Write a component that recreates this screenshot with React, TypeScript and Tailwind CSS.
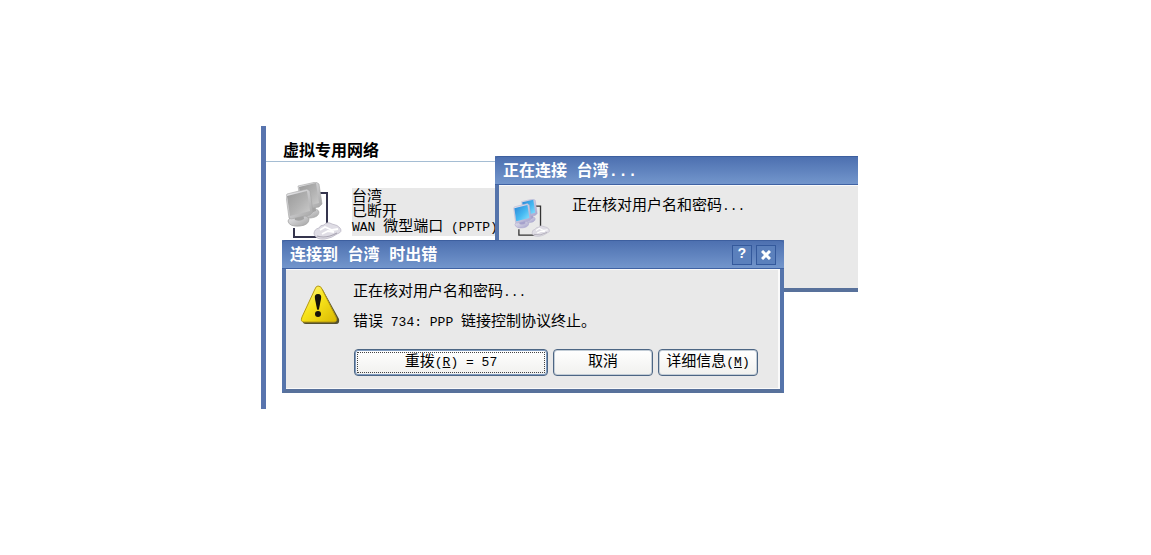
import type { ReactNode } from "react";

// narrow characters run at half the width of the Chinese ones
function Latin({ children }: { children: ReactNode }) {
  return <span className="whitespace-pre text-[13px]">{children}</span>;
}

type NetworkIconProps = {
  id: string;
  className: string;
  light: string;
  mid: string;
  dark: string;
  base: string;
  wire: string;
};

function NetworkIcon({ id, className, light, mid, dark, base, wire }: NetworkIconProps) {
  const screen = `url(#${id}-screen)`;
  const stand = `url(#${id}-stand)`;

  return (
    <svg className={className} viewBox="0 0 56 58" fill="none" aria-hidden="true">
      <defs>
        <linearGradient id={`${id}-screen`} x1="0" y1="0" x2="1" y2="1">
          <stop offset="0" stopColor={dark} />
          <stop offset="0.55" stopColor={mid} />
          <stop offset="1" stopColor={light} />
        </linearGradient>
        <linearGradient id={`${id}-stand`} x1="0" y1="0" x2="1" y2="1">
          <stop offset="0" stopColor="#ececef" />
          <stop offset="1" stopColor={base} />
        </linearGradient>
      </defs>
      <path d="M30 11H41V42M8 46V55H32" stroke={wire} strokeWidth="2" />
      {/* back monitor */}
      <path d="M15 32q2-5 9-5 8-1 9 3 0 5-8 6-9 1-10-4z" fill={stand} stroke={base} strokeWidth="0.6" />
      <path d="M21 22l8-2 1 9q-4 2-8 1z" fill={base} />
      <path d="M12 4L30 0l3 2 3 20-3 3-17 3z" fill={stand} stroke={base} strokeWidth="0.6" />
      <path d="M13 5l17-4 3 20-17 4z" fill={screen} />
      {/* front monitor */}
      <path d="M2 39q2-6 11-6 9 0 10 4 0 6-9 7-11 1-12-5z" fill={stand} stroke={base} strokeWidth="0.8" />
      <path d="M8 32l9-2 1 7q-4 3-9 1z" fill={base} />
      <path d="M0 14l1-2 20-5 3 2 3 21-3 3-19 4-2-1z" fill={stand} stroke={base} strokeWidth="0.6" />
      <path d="M1 14L21 9l3 20-20 5z" fill={screen} />
      {/* modem */}
      <path
        d="M28 52q0-5 5-6 1-3 5-3 3-4 8-1 6 1 8 4 3 4-3 6-5 4-12 5-9 1-11-5z"
        fill="#dfdde5"
        stroke="#bbb8c5"
        strokeWidth="0.8"
      />
      <path d="M34 48l5-3 7 3 6-1M36 52l6-3 6 1" stroke="#fff" strokeWidth="1.8" />
      <path d="M31 54q9 3 20-3" stroke="#aaa6b3" strokeWidth="1.2" />
    </svg>
  );
}

function WarningIcon() {
  return (
    <svg className="mt-[15px] h-10 w-10 shrink-0" viewBox="0 0 40 40" aria-hidden="true">
      <defs>
        <linearGradient id="warning" x1="0" y1="0" x2="1" y2="1">
          <stop offset="0" stopColor="#fff79a" />
          <stop offset="0.45" stopColor="#f8e41c" />
          <stop offset="1" stopColor="#d9b800" />
        </linearGradient>
      </defs>
      <path d="M20 3q2 0 3 2l16 29q1 5-3 5H6q-4 0-3-4z" fill="#55512f" />
      <path
        d="M18 1q3 0 4 3l14 28q2 5-2 5H4q-4 0-2-5L15 4q1-3 3-3z"
        fill="url(#warning)"
        stroke="#b79a10"
      />
      <path d="M18 9q4 0 3 5l-2 10q-1 2-2 0l-2-10q-1-5 3-5z" fill="#16130a" />
      <circle cx="18" cy="29" r="3" fill="#16130a" />
    </svg>
  );
}

const frame =
  "absolute border-4 border-t-0 border-[#5574ab] border-b-[#58719b] bg-[#e9e9e9]";
const titleBar =
  "-mx-1 flex h-[29px] items-center rounded-t-sm border-t border-b border-t-[#3d5f9f] border-b-[#3f62a3] bg-gradient-to-b from-[#4d70b0] to-[#7396cc] px-2 text-[16px] font-bold text-white";
const titleText = "flex-1 pt-1";
const captionButton =
  "flex size-5 items-center justify-center border border-[#34599c] bg-[#5b80bc] text-white";
const button =
  "h-[27px] rounded-[4px] border border-[#4d6684] bg-gradient-to-b from-white to-[#f1f1ee] whitespace-nowrap";
const plainButton = `${button} w-[100px] shadow-[inset_0_0_0_1px_#c3cdd6]`;

export default function App() {
  return (
    <div className="bg-white pt-[126px] pr-[293px] pl-[261px] font-['Liberation_Mono','Noto_Sans_CJK_SC',monospace] text-[15px] leading-[15px] text-black">
      <main className="relative overflow-hidden border-l-[5px] border-[#5874ae] pt-[18px] pb-[169px]">
        <h1 className="border-b border-[#a5bdd3] pb-px pl-[17px] text-[16px] leading-4 font-bold">
          虚拟专用网络
        </h1>

        <section className="mt-5 flex pl-5">
          <NetworkIcon
            id="offline"
            className="h-[58px] w-14 shrink-0"
            light="#cccccc"
            mid="#b2b2b2"
            dark="#999999"
            base="#a3a3a3"
            wire="#35354d"
          />
          <div className="mt-[6px] ml-[10px] h-12 w-[150px] bg-[#e8e8e8] pt-0.5 whitespace-nowrap">
            <p>台湾</p>
            <p>已断开</p>
            <p>
              <Latin>WAN </Latin>微型端口<Latin> (PPTP)</Latin>
            </p>
          </div>
        </section>

        <section className={`${frame} top-[30px] right-0 left-[229px] border-r-0`}>
          <header className={titleBar}>
            <h2 className={titleText}>正在连接 台湾...</h2>
          </header>
          <div className="flex h-[103px] border-t border-[#fafafa] pt-[13px] pl-[14px]">
            <NetworkIcon
              id="dialing"
              className="h-[38px] w-[38px] shrink-0"
              light="#8fe4ff"
              mid="#45b9f2"
              dark="#2a82d4"
              base="#a5a1cc"
              wire="#333333"
            />
            <p className="ml-[21px] whitespace-nowrap">
              正在核对用户名和密码<Latin>...</Latin>
            </p>
          </div>
        </section>

        <section
          className={`${frame} top-[114px] left-4 w-[502px]`}
          role="dialog"
          aria-label="连接到 台湾 时出错"
        >
          <header className={titleBar}>
            <h2 className={titleText}>连接到 台湾 时出错</h2>
            <div className="flex gap-1">
              <button type="button" className={`${captionButton} text-[14px] font-bold`}>
                ?
              </button>
              <button type="button" className={captionButton} aria-label="关闭">
                <svg className="size-[10px]" viewBox="0 0 10 10" aria-hidden="true">
                  <path d="M1 1l8 8M9 1L1 9" stroke="currentColor" strokeWidth="3" />
                </svg>
              </button>
            </div>
          </header>

          <div className="border-t border-r-2 border-b border-[#fafafa] pb-3 pl-[14px]">
            <div className="flex">
              <WarningIcon />
              <div className="ml-[13px] pt-[15px]">
                <p>
                  正在核对用户名和密码<Latin>...</Latin>
                </p>
                <p className="mt-[15px]">
                  错误<Latin> 734: PPP </Latin>链接控制协议终止。
                </p>
              </div>
            </div>
            <div className="mt-[19px] mr-5 ml-[54px] flex gap-[5px]">
              <button
                type="button"
                className={`${button} flex-1 p-0.5 shadow-[inset_0_0_0_1px_#7f9bc0]`}
              >
                <span className="flex h-full items-center justify-center border border-dotted border-[#444]">
                  重拨<Latin>(<u>R</u>) = 57</Latin>
                </span>
              </button>
              <button type="button" className={plainButton}>
                取消
              </button>
              <button type="button" className={plainButton}>
                详细信息<Latin>(<u>M</u>)</Latin>
              </button>
            </div>
          </div>
        </section>
      </main>
    </div>
  );
}
